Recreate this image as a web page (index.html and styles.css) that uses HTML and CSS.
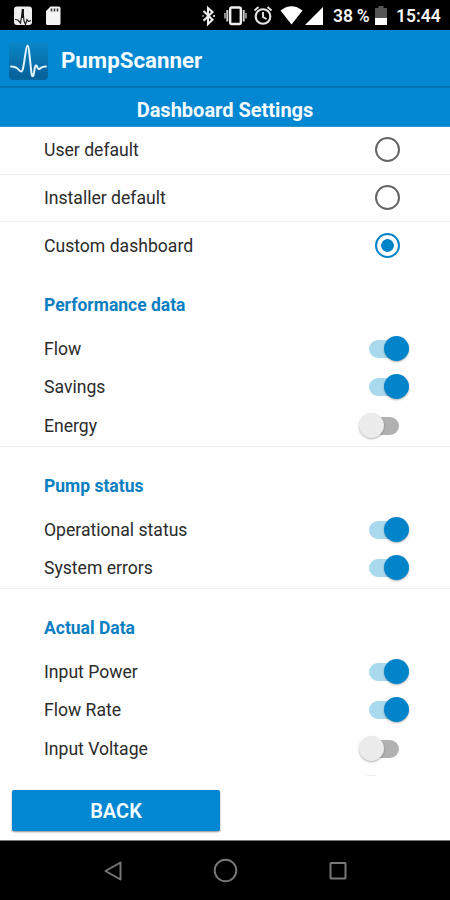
FILE: index.html
```html
<!DOCTYPE html>
<html lang="en">
<head>
<meta charset="utf-8">
<title>PumpScanner</title>
<link rel="stylesheet" href="styles.css">
</head>
<body>
<div class="phone">
  <div class="status">
    <svg class="status-icons" width="450" height="30" viewBox="0 0 450 30">
      <rect x="14" y="6.500" width="18" height="18.500" rx="3" fill="#f0f0f0"/>
      <path d="M15 19.500l3 .5 2.500 3 2.300-14 1.200 12 1.500 3.500 1.500-5 1.500 2 2.500-1" fill="none" stroke="#222" stroke-width="1.200"/>
      <path d="M22.800 9v9" stroke="#111" stroke-width="2.200"/>
      <path d="M50.500 6.500H59a1.500 1.500 0 0 1 1.500 1.500v15.500A1.500 1.500 0 0 1 59 25H47.500a1.500 1.500 0 0 1-1.500-1.500V11z" fill="#f4f4f4"/>
      <path d="M51.500 8.500v3M54.500 8.500v3M57.500 8.500v3" stroke="#333" stroke-width="1.600"/>
      <path d="M203.500 11l9 8.700-4.500 4.300V8l4.500 4-9 8.700" fill="none" stroke="#eee" stroke-width="2.100"/>
      <path d="M202.500 16h1M213.200 16h1.600" stroke="#eee" stroke-width="2"/>
      <rect x="230.200" y="7.500" width="10.600" height="16.500" rx="1.500" fill="none" stroke="#eee" stroke-width="2.400"/>
      <path d="M227.300 10v11.500M243.700 10v11.500" stroke="#ccc" stroke-width="2"/>
      <path d="M225 13v5.500M246 13v5.500" stroke="#aaa" stroke-width="1.600"/>
      <circle cx="263" cy="16.500" r="7.300" fill="none" stroke="#e5e5e5" stroke-width="2.100"/>
      <path d="M263 12v5l3.500 2M254.500 10.500l4-3.500M271.500 10.500l-4-3.500" fill="none" stroke="#e5e5e5" stroke-width="1.900"/>
      <path d="M280.500 10.500Q291.500 2 302.500 10.500L291.500 24.500z" fill="#fff"/>
      <path d="M323 7v18h-18z" fill="#fff"/>
      <path d="M378.500 6h5v2h3.500v10h-12V8h3.500z" fill="#555"/>
      <path d="M375 18h12v7h-12z" fill="#fff"/>
    </svg>
    <span class="battery">38 %</span>
    <span class="clock">15:44</span>
  </div>
  <header class="appbar">
    <svg class="logo" width="40" height="41" viewBox="0 0 40 41">
      <defs><linearGradient id="tile" x1="0" y1="0" x2="0" y2="1"><stop offset="0" stop-color="#0a86c8"/><stop offset=".5" stop-color="#0874b0"/><stop offset="1" stop-color="#07609a"/></linearGradient></defs>
      <rect x="1" y="3" width="39" height="37" rx="4" fill="#05679f"/>
      <rect x="1" y="2" width="39" height="36" rx="4" fill="url(#tile)"/>
      <path d="M3 26.500c4 0 6 1 8 3.500 2 2.500 3.300 2 4-1.500C16.500 22 18 5.500 19.500 5.500s2.500 15.500 4 28c.7 4.500 2 3 2.600-1 .8-7 1.800-9 3.400-5 .8 2.500 2 1.500 3.500.3 1.200-1 3-1.300 5-1.300" fill="none" stroke="#e0f4ff" stroke-width="2" stroke-linecap="round" stroke-linejoin="round"/>
    </svg>
    <h1 class="app-name">PumpScanner</h1>
  </header>
  <h2 class="page-title">Dashboard Settings</h2>
  <main class="content">
    <div class="choice lined"><span>User default</span><i class="radio"></i></div>
    <div class="choice lined"><span>Installer default</span><i class="radio"></i></div>
    <div class="choice"><span>Custom dashboard</span><i class="radio picked"></i></div>
    <section class="group first">
      <h3>Performance data</h3>
      <div class="row"><span>Flow</span><i class="switch on"></i></div>
      <div class="row"><span>Savings</span><i class="switch on"></i></div>
      <div class="row"><span>Energy</span><i class="switch"></i></div>
    </section>
    <section class="group">
      <h3>Pump status</h3>
      <div class="row"><span>Operational status</span><i class="switch on"></i></div>
      <div class="row"><span>System errors</span><i class="switch on"></i></div>
    </section>
    <section class="group">
      <h3>Actual Data</h3>
      <div class="row"><span>Input Power</span><i class="switch on"></i></div>
      <div class="row"><span>Flow Rate</span><i class="switch on"></i></div>
      <div class="row"><span>Input Voltage</span><i class="switch"></i></div>
      <div class="row"><span></span><i class="switch"></i></div>
    </section>
  </main>
  <footer class="actions"><button class="back">BACK</button></footer>
  <nav class="navbar">
    <svg width="450" height="59" viewBox="0 0 450 59" fill="none" stroke="#777" stroke-width="2">
      <path d="M120.500 21.500v17l-15-8.500z" stroke-linejoin="round"/>
      <circle cx="225.500" cy="29.500" r="10.800"/>
      <rect x="330.500" y="22" width="15" height="15.500" rx=".5"/>
    </svg>
  </nav>
</div>
</body>
</html>
```
FILE: styles.css
```css
* { box-sizing: border-box; }
body { margin: 0; font-family: Roboto, "Liberation Sans", sans-serif; }
h1, h2, h3 { margin: 0; }
.phone { width: 450px; height: 900px; display: flex; flex-direction: column; background: #fefefe; overflow: hidden; }

.status { position: relative; height: 30px; flex: none; display: flex; align-items: center; justify-content: flex-end; padding: 3px 10px 0 0; background: #000; color: #f4f4f4; font-size: 17.500px; font-weight: 600; line-height: 27px; }
.status-icons { position: absolute; left: 0; top: 0; }
.battery { width: 63px; white-space: nowrap; word-spacing: -.5px; }
.clock { width: 44px; white-space: nowrap; }

.appbar { height: 58px; flex: none; display: flex; align-items: center; gap: 13px; padding: 0 8px; background: #0287d2; border-bottom: 2px solid #0271af; }
.logo { flex: none; margin-top: 5px; }
.app-name { margin-top: 3px; color: #f4fbff; font-size: 22.300px; font-weight: 700; line-height: 30px; }
.page-title { height: 39px; flex: none; padding-top: 3px; background: #0287d2; color: #f4fbff; font-size: 20px; font-weight: 700; line-height: 38px; text-align: center; border-bottom: 1px solid #2f94cc; }

.content { height: 649px; flex: none; overflow: hidden; }
.choice, .row { display: flex; align-items: center; justify-content: space-between; color: #2b2b2b; font-size: 17.600px; }
.choice { height: 47.600px; padding: 0 50px 0 44px; }
.lined { border-bottom: 1px solid #f1f1f1; }
.radio { width: 25px; height: 25px; margin-bottom: 1px; border: 2px solid #666; border-radius: 50%; }
.radio.picked { border: 2.500px solid #0284ca; background: radial-gradient(circle, #0284ca 6px, transparent 6.700px); }

.group { border-top: 1px solid #f1f1f1; padding-top: 15px; }
.group.first { border-top-color: transparent; padding-top: 10px; }
.group h3 { height: 48.500px; color: #0a7fc1; font-size: 17.500px; font-weight: 700; line-height: 49px; padding-left: 44px; }
.row { height: 38.800px; padding: 0 41px 0 44px; }
.switch { position: relative; width: 50px; height: 26px; }
.switch::before { content: ""; position: absolute; left: 10px; top: 4px; width: 30px; height: 18px; border-radius: 9px; background: #b1b1b1; }
.switch::after { content: ""; position: absolute; left: 0; top: 0; width: 25px; height: 25px; border-radius: 50%; background: #ececec; box-shadow: 0 1px 2px rgba(0, 0, 0, .3); }
.switch.on::before { background: #a9d9ed; }
.switch.on::after { left: 25px; background: #0284ca; }

.actions { flex: 1; padding: 14px 12px 0; }
.back { display: block; width: 208px; height: 41px; padding: 1px 0 0; border: 0; border-radius: 2px; background: #0287d2; color: #f4fbff; font: 600 20px Roboto, "Liberation Sans", sans-serif; box-shadow: 0 1px 2px rgba(0, 0, 0, .45); }
.navbar { height: 60px; flex: none; background: #000; border-top: 1px solid #777; }
.navbar svg { display: block; }
```
